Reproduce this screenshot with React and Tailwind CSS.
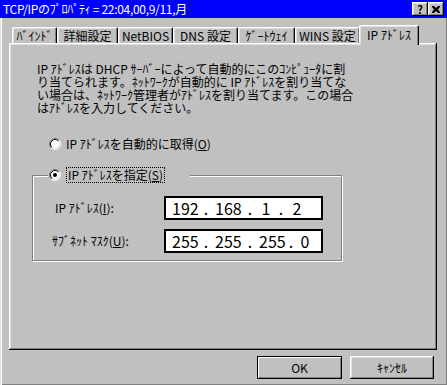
import React from 'react'

const FONT = "font-['Noto_Sans_CJK_JP',sans-serif]"

const TABS = [
  { label: 'ﾊﾞｲﾝﾄﾞ', w: 'w-[45px]' },
  { label: '詳細設定', w: 'w-[61px]' },
  { label: 'NetBIOS', w: 'w-[55px]' },
  { label: 'DNS 設定', w: 'w-[65px]' },
  { label: 'ｹﾞｰﾄｳｪｲ', w: 'w-[57px]' },
  { label: 'WINS 設定', w: 'w-[65px]' },
]

function Radio({ checked }) {
  return (
    <svg width="12" height="12" viewBox="0 0 12 12" className="shrink-0">
      <circle cx="6" cy="6" r="4.5" fill="#fff" />
      <path d="M2.11 9.89 A5.5 5.5 0 0 0 9.89 2.11" stroke="#fff" fill="none" />
      <path d="M2.11 9.89 A5.5 5.5 0 0 1 9.89 2.11" stroke="#808080" fill="none" />
      <path d="M2.82 9.18 A4.5 4.5 0 0 0 9.18 2.82" stroke="#dfdfdf" fill="none" />
      <path d="M2.82 9.18 A4.5 4.5 0 0 1 9.18 2.82" stroke="#000" fill="none" />
      {checked && <circle cx="6" cy="6" r="2" fill="#000" />}
    </svg>
  )
}

function CaptionButton({ children }) {
  return (
    <div className="w-[16px] h-[14px] bg-[#c0c0c0] flex items-center justify-center shadow-[inset_-1px_-1px_#000,inset_1px_1px_#fff,inset_-2px_-2px_#808080,inset_2px_2px_#dfdfdf]">
      {children}
    </div>
  )
}

// tokens: [text, width]
function IpField({ tokens }) {
  return (
    <div className="w-[159px] h-[24px] bg-white border-2 border-black flex items-center pl-[6px] text-[16px] leading-none text-black">
      {tokens.map(([t, w], i) => (
        <span key={i} className="text-center" style={{ width: w }}>
          {t}
        </span>
      ))}
    </div>
  )
}

export default function App() {
  return (
    <div className={`w-[447px] h-[385px] bg-[#c0c0c0] flex flex-col overflow-hidden text-black ${FONT}`}>
      {/* Title bar */}
      <div className="h-[18px] bg-[#0000ff] flex items-center pl-[3px] pr-[3px]">
        <span className="flex-1 text-white text-[12px] leading-none tracking-[-0.3px] whitespace-pre">
          TCP/IPのﾌﾟﾛﾊﾟﾃｨ = 22:04,00,9/11,月
        </span>
        <CaptionButton>
          <span className="text-[11px] font-bold leading-none">?</span>
        </CaptionButton>
        <CaptionButton>
          <svg width="8" height="7" viewBox="0 0 8 7">
            <path d="M0 0h2l2 2 2-2h2v1L6 3.5 8 6v1H6L4 5 2 7H0V6l2-2.5L0 1z" fill="#000" />
          </svg>
        </CaptionButton>
      </div>

      {/* Body */}
      <div className="flex-1 flex flex-col pt-[7px] shadow-[inset_1px_0_#dfdfdf,inset_2px_0_#fff,inset_-1px_-1px_#808080]">
        {/* Tabs */}
        <div className="h-[18px] flex items-end pl-[12px]">
          {TABS.map((t) => (
            <div
              key={t.label}
              className={`${t.w} h-[16px] flex items-center justify-center border-l border-t border-r border-l-white border-t-white border-r-black rounded-t-[2px] shadow-[inset_-1px_0_#808080,inset_1px_1px_#dfdfdf] text-[12px] leading-none whitespace-nowrap`}
            >
              {t.label}
            </div>
          ))}
          <div className="w-[60px] h-[20px] -mb-[2px] -ml-[1px] relative z-10 bg-[#c0c0c0] flex items-start justify-center pt-[3px] border-l border-t border-r border-l-white border-t-white border-r-black rounded-t-[2px] shadow-[inset_-1px_0_#808080,inset_1px_1px_#dfdfdf] text-[12px] leading-none whitespace-nowrap">
            IP ｱﾄﾞﾚｽ
          </div>
        </div>

        {/* Panel */}
        <div className="ml-[9px] w-[428px] h-[307px] flex flex-col pl-[28px] pt-[19px] shadow-[inset_-1px_-1px_#000,inset_1px_1px_#fff,inset_-2px_-2px_#808080,inset_2px_2px_#dfdfdf]">
          <p className="text-[12px] leading-[13px] whitespace-nowrap">
            IP ｱﾄﾞﾚｽは DHCP ｻｰﾊﾞｰによって自動的にこのｺﾝﾋﾟｭｰﾀに割
            <br />
            り当てられます。ﾈｯﾄﾜｰｸが自動的に IP ｱﾄﾞﾚｽを割り当てな
            <br />
            い場合は、ﾈｯﾄﾜｰｸ管理者がｱﾄﾞﾚｽを割り当てます。この場合
            <br />
            はｱﾄﾞﾚｽを入力してください。
          </p>

          <div className="mt-[23px] ml-[12px] h-[14px] flex items-center gap-[5px] text-[12px] leading-none">
            <Radio />
            <span>
              IP ｱﾄﾞﾚｽを自動的に取得(<u>O</u>)
            </span>
          </div>

          {/* Group box */}
          <div className="mt-[24px] -ml-[5px] w-[310px] h-[86px] flex flex-col border border-[#808080] shadow-[inset_1px_1px_#fff,1px_1px_#fff]">
            <div className="-mt-[9px] ml-[15px] w-[142px] h-[16px] bg-[#c0c0c0] flex items-center">
              <div className="ml-[1px]">
                <Radio checked />
              </div>
              <span className="ml-[5px] h-[16px] px-[1px] flex items-center border border-dotted border-black text-[12px] leading-none whitespace-nowrap">
                IP ｱﾄﾞﾚｽを指定(<u>S</u>)
              </span>
            </div>

            <div className="mt-[13px] h-[24px] flex items-center">
              <span className="ml-[22px] w-[109px] text-[12px] leading-none whitespace-nowrap">
                IP ｱﾄﾞﾚｽ(<u>I</u>):
              </span>
              <IpField
                tokens={[
                  ['192', 25],
                  ['.', 18],
                  ['168', 26],
                  ['.', 18],
                  ['1', 14],
                  ['.', 16],
                  ['2', 16],
                ]}
              />
            </div>

            <div className="mt-[9px] h-[24px] flex items-center">
              <span className="ml-[19px] w-[112px] text-[12px] leading-none whitespace-nowrap">
                ｻﾌﾞﾈｯﾄ ﾏｽｸ(<u>U</u>):
              </span>
              <IpField
                tokens={[
                  ['255', 25],
                  ['.', 18],
                  ['255', 26],
                  ['.', 18],
                  ['255', 25],
                  ['.', 14],
                  ['0', 14],
                ]}
              />
            </div>
          </div>
        </div>

        {/* Buttons */}
        <div className="mt-[6px] flex justify-end gap-[8px] pr-[13px]">
          <button className="w-[85px] h-[23px] bg-[#c0c0c0] border border-black shadow-[inset_1px_1px_#fff,inset_-1px_-1px_#808080] text-[12px] leading-none">
            OK
          </button>
          <button className="w-[84px] h-[23px] bg-[#c0c0c0] shadow-[inset_-1px_-1px_#000,inset_1px_1px_#fff,inset_-2px_-2px_#808080,inset_2px_2px_#dfdfdf] text-[12px] leading-none">
            ｷｬﾝｾﾙ
          </button>
        </div>
      </div>
    </div>
  )
}
